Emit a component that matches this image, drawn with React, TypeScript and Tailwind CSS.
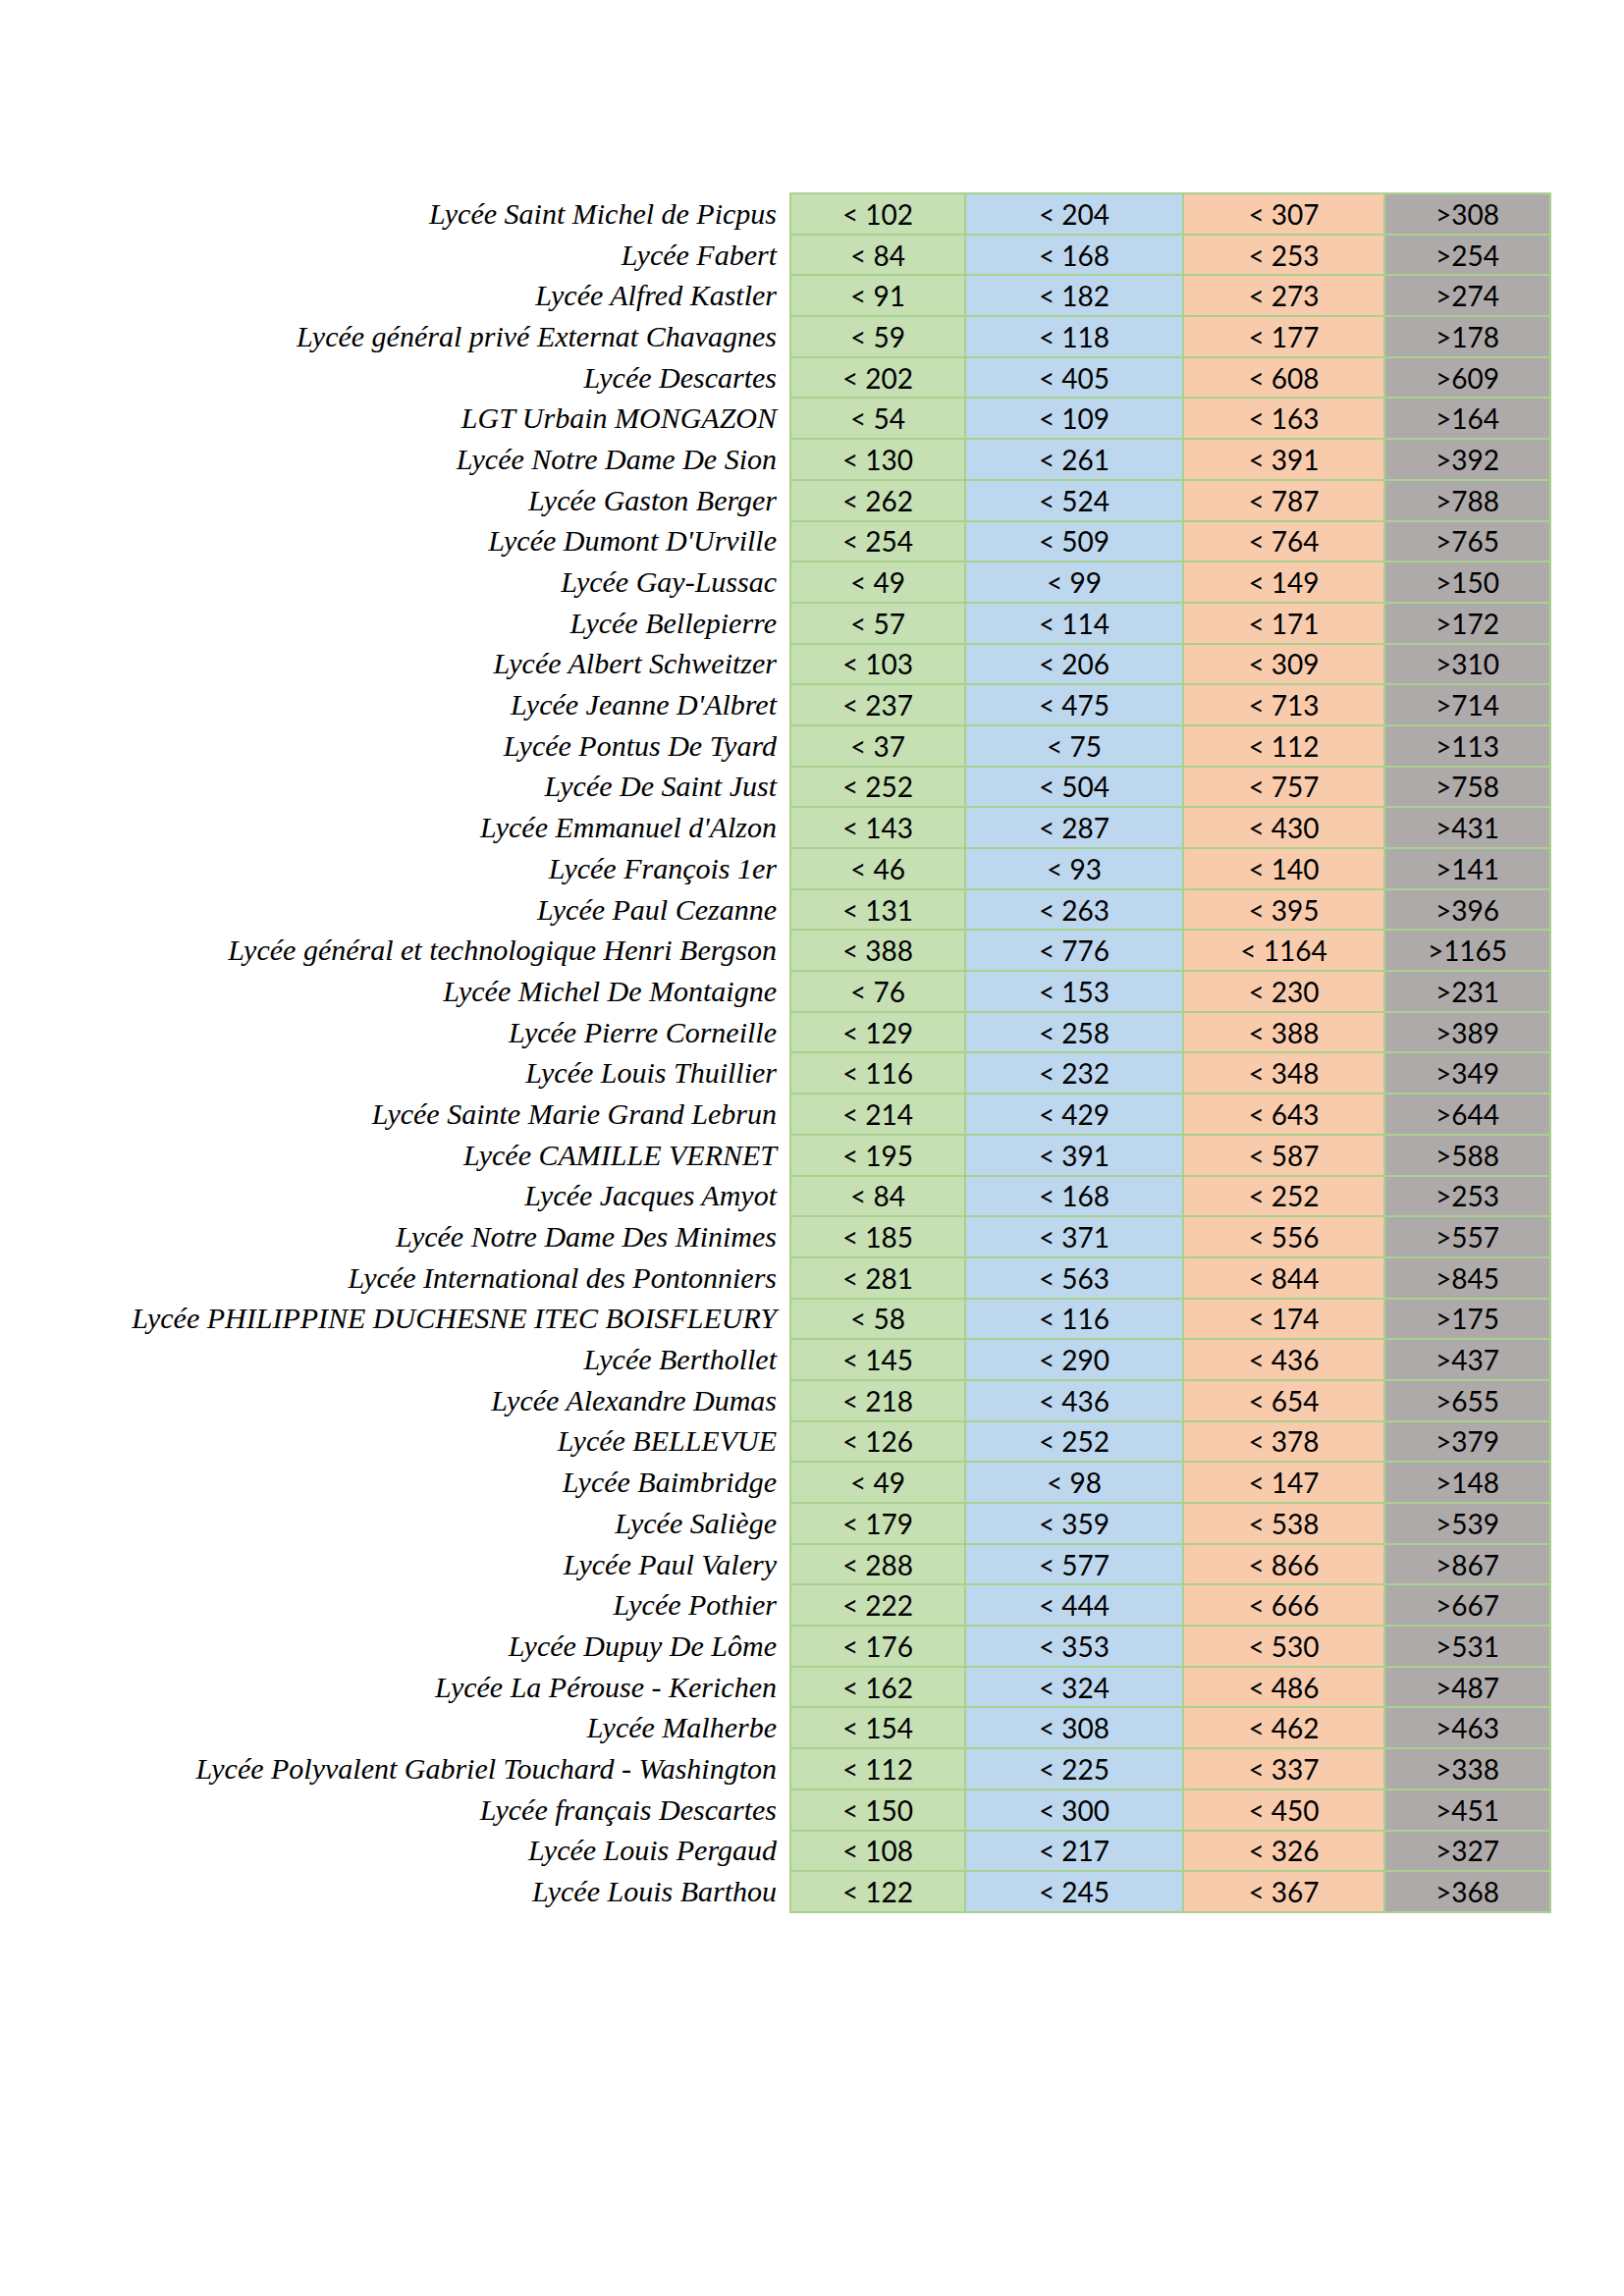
const rows: [string, string, string, string, string][] = [
  ["Lycée Saint Michel de Picpus", "< 102", "< 204", "< 307", ">308"],
  ["Lycée Fabert", "< 84", "< 168", "< 253", ">254"],
  ["Lycée Alfred Kastler", "< 91", "< 182", "< 273", ">274"],
  ["Lycée général privé Externat Chavagnes", "< 59", "< 118", "< 177", ">178"],
  ["Lycée Descartes", "< 202", "< 405", "< 608", ">609"],
  ["LGT Urbain MONGAZON", "< 54", "< 109", "< 163", ">164"],
  ["Lycée Notre Dame De Sion", "< 130", "< 261", "< 391", ">392"],
  ["Lycée Gaston Berger", "< 262", "< 524", "< 787", ">788"],
  ["Lycée Dumont D'Urville", "< 254", "< 509", "< 764", ">765"],
  ["Lycée Gay-Lussac", "< 49", "< 99", "< 149", ">150"],
  ["Lycée Bellepierre", "< 57", "< 114", "< 171", ">172"],
  ["Lycée Albert Schweitzer", "< 103", "< 206", "< 309", ">310"],
  ["Lycée Jeanne D'Albret", "< 237", "< 475", "< 713", ">714"],
  ["Lycée Pontus De Tyard", "< 37", "< 75", "< 112", ">113"],
  ["Lycée De Saint Just", "< 252", "< 504", "< 757", ">758"],
  ["Lycée Emmanuel d'Alzon", "< 143", "< 287", "< 430", ">431"],
  ["Lycée François 1er", "< 46", "< 93", "< 140", ">141"],
  ["Lycée Paul Cezanne", "< 131", "< 263", "< 395", ">396"],
  ["Lycée général et technologique Henri Bergson", "< 388", "< 776", "< 1164", ">1165"],
  ["Lycée Michel De Montaigne", "< 76", "< 153", "< 230", ">231"],
  ["Lycée Pierre Corneille", "< 129", "< 258", "< 388", ">389"],
  ["Lycée Louis Thuillier", "< 116", "< 232", "< 348", ">349"],
  ["Lycée Sainte Marie Grand Lebrun", "< 214", "< 429", "< 643", ">644"],
  ["Lycée CAMILLE VERNET", "< 195", "< 391", "< 587", ">588"],
  ["Lycée Jacques Amyot", "< 84", "< 168", "< 252", ">253"],
  ["Lycée Notre Dame Des Minimes", "< 185", "< 371", "< 556", ">557"],
  ["Lycée International des Pontonniers", "< 281", "< 563", "< 844", ">845"],
  ["Lycée PHILIPPINE DUCHESNE ITEC BOISFLEURY", "< 58", "< 116", "< 174", ">175"],
  ["Lycée Berthollet", "< 145", "< 290", "< 436", ">437"],
  ["Lycée Alexandre Dumas", "< 218", "< 436", "< 654", ">655"],
  ["Lycée BELLEVUE", "< 126", "< 252", "< 378", ">379"],
  ["Lycée Baimbridge", "< 49", "< 98", "< 147", ">148"],
  ["Lycée Saliège", "< 179", "< 359", "< 538", ">539"],
  ["Lycée Paul Valery", "< 288", "< 577", "< 866", ">867"],
  ["Lycée Pothier", "< 222", "< 444", "< 666", ">667"],
  ["Lycée Dupuy De Lôme", "< 176", "< 353", "< 530", ">531"],
  ["Lycée La Pérouse - Kerichen", "< 162", "< 324", "< 486", ">487"],
  ["Lycée Malherbe", "< 154", "< 308", "< 462", ">463"],
  ["Lycée Polyvalent Gabriel Touchard - Washington", "< 112", "< 225", "< 337", ">338"],
  ["Lycée français Descartes", "< 150", "< 300", "< 450", ">451"],
  ["Lycée Louis Pergaud", "< 108", "< 217", "< 326", ">327"],
  ["Lycée Louis Barthou", "< 122", "< 245", "< 367", ">368"],
];

const cell = "border-2 border-[#a9d18e] text-center p-0 font-['Lato',sans-serif] text-[28px] leading-none text-black";

export default function App() {
  return (
    <div className="min-h-[2339px] w-[1654px] bg-white pt-[196px]">
      <table className="border-collapse" style={{ tableLayout: "fixed" }}>
        <colgroup>
          <col className="w-[805px]" />
          <col className="w-[178px]" />
          <col className="w-[222px]" />
          <col className="w-[205px]" />
          <col className="w-[169px]" />
        </colgroup>
        <tbody>
          {rows.map(([name, a, b, c, d]) => (
            <tr key={name} className="h-[41.7px]">
              <td className="whitespace-nowrap p-0 pr-[13px] text-right font-['Liberation_Serif',serif] text-[30px] italic leading-none text-black">
                {name}
              </td>
              <td className={`${cell} bg-[#c6e0b4]`}>{a}</td>
              <td className={`${cell} bg-[#bdd7ee]`}>{b}</td>
              <td className={`${cell} bg-[#f8cbad]`}>{c}</td>
              <td className={`${cell} bg-[#aeaaaa]`}>{d}</td>
            </tr>
          ))}
        </tbody>
      </table>
    </div>
  );
}
